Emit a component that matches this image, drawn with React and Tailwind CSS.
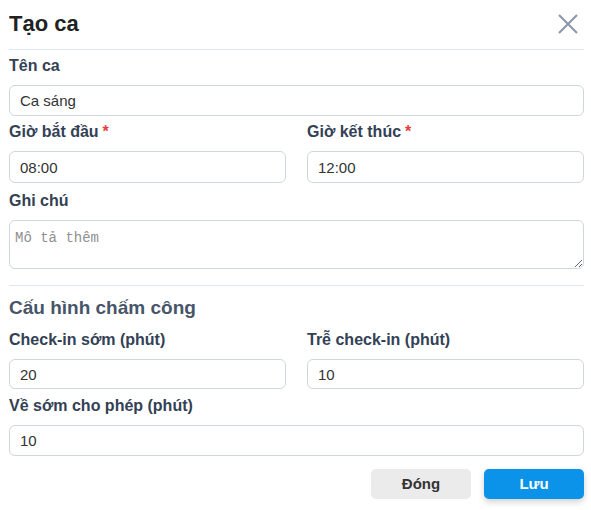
import React from 'react';

function Label({ children, required }) {
  return (
    <label className="block h-[22px] mb-2 text-[16px] leading-[22px] font-bold text-[#334155]">
      {children}
      {required && <span className="ml-1 text-[#e53e3e]">*</span>}
    </label>
  );
}

function TextInput({ value, h = 'h-[31px]' }) {
  return (
    <input
      type="text"
      defaultValue={value}
      className={`block w-full ${h} px-[10px] rounded-[6px] border border-[#cfd6df] bg-white text-[15px] text-[#333] outline-none`}
    />
  );
}

export default function App() {
  return (
    <div className="w-[591px] h-[510px] bg-white font-['Liberation_Sans',Arial,sans-serif]">
      <div className="ml-[9px] w-[575px]">
        <div className="flex items-center justify-between pt-[10px] pb-[11px] border-b border-[#e2e8f0]">
          <h2 className="text-[22px] leading-[28px] font-bold text-[#222]">Tạo ca</h2>
          <button className="mr-[6px] text-[#8b95a7]">
            <svg width="20" height="20" viewBox="0 0 20 20" fill="none" stroke="currentColor" strokeWidth="2">
              <path d="M1 1L19 19M19 1L1 19" />
            </svg>
          </button>
        </div>

        <div className="mt-[5px]">
          <Label>Tên ca</Label>
          <TextInput value="Ca sáng" />
        </div>

        <div className="mt-[5px] grid grid-cols-2 gap-x-[21px]">
          <div>
            <Label required>Giờ bắt đầu</Label>
            <TextInput value="08:00" h="h-[32px]" />
          </div>
          <div>
            <Label required>Giờ kết thúc</Label>
            <TextInput value="12:00" h="h-[32px]" />
          </div>
        </div>

        <div className="mt-[7px]">
          <Label>Ghi chú</Label>
          <textarea
            placeholder="Mô tả thêm"
            className="block w-full h-[49px] px-[5px] pt-[7px] rounded-[6px] border border-[#cfd6df] font-['Liberation_Mono',monospace] text-[14px] text-[#333] placeholder:text-[#8f8f8f] outline-none"
          />
        </div>

        <div className="mt-[16px] border-t border-[#e2e8f0]" />

        <h3 className="mt-[9px] text-[19px] leading-[26px] font-bold text-[#475569]">Cấu hình chấm công</h3>

        <div className="mt-[8px] grid grid-cols-2 gap-x-[21px]">
          <div>
            <Label>Check-in sớm (phút)</Label>
            <TextInput value="20" h="h-[30px]" />
          </div>
          <div>
            <Label>Trễ check-in (phút)</Label>
            <TextInput value="10" h="h-[30px]" />
          </div>
        </div>

        <div className="mt-[6px]">
          <Label>Về sớm cho phép (phút)</Label>
          <TextInput value="10" />
        </div>

        <div className="mt-[13px] flex justify-end gap-[13px]">
          <button className="w-[100px] h-[30px] rounded-[5px] bg-[#ebebeb] text-[15px] font-bold text-[#333]">
            Đóng
          </button>
          <button className="w-[100px] h-[30px] rounded-[5px] bg-[#0b93e9] text-[15px] font-bold text-white shadow-[0_3px_6px_rgba(0,0,0,0.18)]">
            Lưu
          </button>
        </div>
      </div>
    </div>
  );
}
